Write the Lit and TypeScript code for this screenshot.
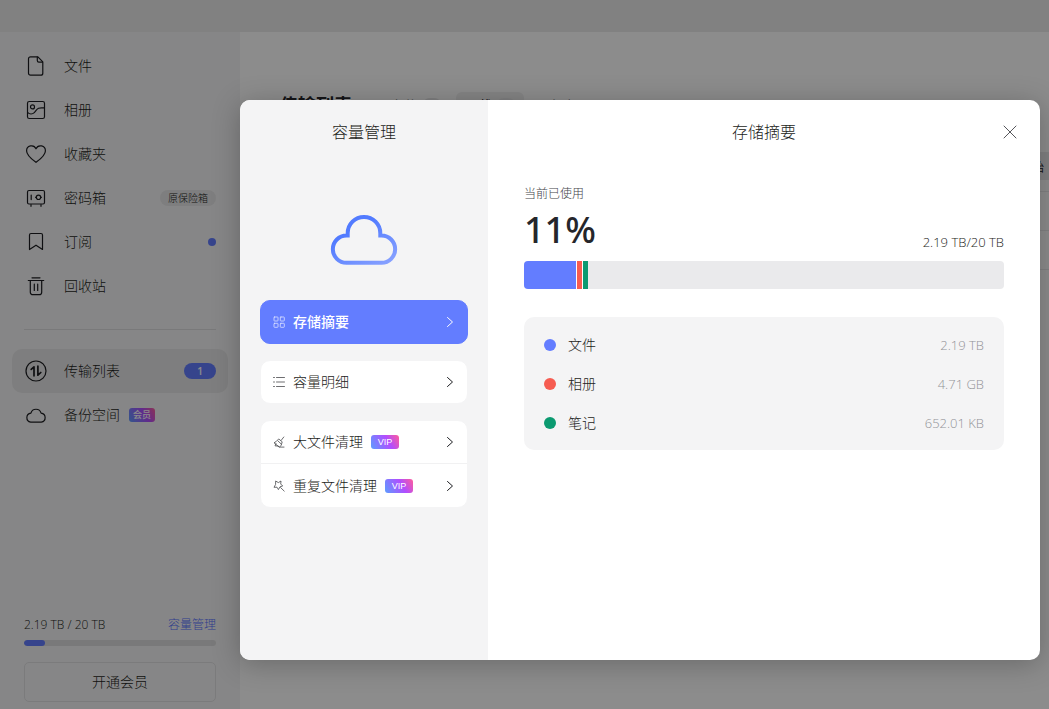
import { LitElement, html, css, svg, nothing, type TemplateResult } from "lit";
import { customElement, property, state } from "lit/decorators.js";
import { classMap } from "lit/directives/class-map.js";
import { styleMap } from "lit/directives/style-map.js";

const glyphs: Record<string, TemplateResult> = {
  file: svg`<path d="M6.500 2.800h7.400l4.900 5v11.400a2 2 0 0 1-2 2H6.500a2 2 0 0 1-2-2V4.800a2 2 0 0 1 2-2z"/><path d="M13.300 3.200v3.400a1.600 1.600 0 0 0 1.600 1.600h3.500"/>`,
  album: svg`<rect x="3.500" y="3.500" width="17" height="17" rx="1.800"/><circle cx="8.500" cy="8.900" r="2"/><path d="M3.800 14.600c1.700 1.700 4.600 1.800 6.500 0 1.500-1.400 2.200-3.400 4.300-4.300 1.800-.7 3.800-.2 5.700-.4"/>`,
  heart: svg`<path d="M12 20.300C8 17.300 2.600 13.400 2.600 8.900a4.900 4.900 0 0 1 9.400-2.100 4.900 4.900 0 0 1 9.400 2.100c0 4.500-5.400 8.400-9.400 11.400z"/>`,
  safe: svg`<rect x="3.500" y="4.500" width="17" height="13.500" rx="1.500"/><circle cx="14.500" cy="11.300" r="2.200"/><path d="M7.200 9v4.600M7 18.500v1.800M17 18.500v1.800M17 11.300h.4M11.600 11.300h.4"/>`,
  bookmark: svg`<path d="M5.500 5a1.500 1.500 0 0 1 1.500-1.500h10A1.500 1.500 0 0 1 18.500 5v14.500L12 15.200l-6.500 4.300z"/>`,
  trash: svg`<path d="M8 3.800h8M4.300 6.500h15.400M6.300 6.500v11.700a2.500 2.500 0 0 0 2.500 2.500h6.400a2.500 2.500 0 0 0 2.500-2.500V6.500M10.300 10v6.500M13.700 10v6.500"/>`,
  transfer: svg`<circle cx="12" cy="12" r="10"/><path stroke-width="1.700" d="M7.200 10.400L10 7.800v9M13.900 7.200v9l2.900-2.700"/>`,
  cloud: svg`<path d="M6.700 19.200a4.600 4.600 0 0 1 .2-9.100 5.300 5.300 0 0 1 10.200 0 4.600 4.600 0 0 1 .2 9.100z"/>`,
  grid: svg`<rect x="1" y="1" width="4" height="4" rx=".6"/><rect x="7.300" y="1" width="4" height="4" rx=".6"/><rect x="1" y="7.300" width="4" height="4" rx=".6"/><rect x="7.300" y="7.300" width="4" height="4" rx=".6"/>`,
  list: svg`<path d="M.5 1.500h1M.5 6h1M.5 10.500h1M3.500 1.500h8M3.500 6h8M3.500 10.500h8"/>`,
  broom: svg`<path d="M10.800 1L8.300 4.200M6 3.200l3.200 2.600-1 3.400-1.800 2L1 6.800l2-1.200zM5 5l3.200 3M3 7.600l-1 2.200 3.200.3 1.300 1h4.500"/>`,
  wand: svg`<path d="M3 1.200l2.300 1.400L8 1l-.3 3 2 2-2.700.8L5.400 9.600 4 7.200 1 7.300l1.400-2.500zM7.600 7.600l3.600 3.500"/>`,
};

const icon = (name: string, box: number) =>
  html`<svg class="icon" viewBox="0 0 ${box} ${box}" width=${box} height=${box} aria-hidden="true">${glyphs[name]}</svg>`;

const shared = css`
  :host { display: block; box-sizing: border-box; font-family: "Open Sans", "Noto Sans CJK SC", sans-serif; }
  *, *::before, *::after { box-sizing: border-box; }
  button { font: inherit; color: inherit; border: 0; background: none; padding: 0; cursor: pointer; }
  a { color: inherit; text-decoration: none; }
  ul { list-style: none; margin: 0; padding: 0; }
  .icon { display: block; flex: none; fill: none; stroke: currentColor; stroke-linecap: round; stroke-linejoin: round; }
`;

interface NavEntry {
  icon: string;
  label: string;
  tag?: string;
  dot?: boolean;
  count?: number;
  member?: boolean;
}

const library: NavEntry[] = [
  { icon: "file", label: "文件" },
  { icon: "album", label: "相册" },
  { icon: "heart", label: "收藏夹" },
  { icon: "safe", label: "密码箱", tag: "原保险箱" },
  { icon: "bookmark", label: "订阅", dot: true },
  { icon: "trash", label: "回收站" },
];

const tools: NavEntry[] = [
  { icon: "transfer", label: "传输列表", count: 1 },
  { icon: "cloud", label: "备份空间", member: true },
];

@customElement("side-nav")
export class SideNav extends LitElement {
  static styles = [shared, css`
    :host { display: flex; flex-direction: column; padding: 12px 12px 7px; background: #f5f5f6; color: #1c1d21; font-size: 14px; font-weight: 300; }
    .row { display: flex; align-items: center; height: 44px; padding: 0 12px; border-radius: 10px; line-height: 20px; }
    .row .icon { stroke-width: 1.2; margin-right: 16px; }
    .row.current { background: #e6e6e7; }
    .end { margin-left: auto; }
    .tag { height: 16px; padding: 0 8px; border-radius: 8px; background: #e6e6e7; font-size: 10px; line-height: 16px; }
    .dot { width: 8px; height: 8px; border-radius: 50%; background: #637dff; }
    .count { width: 32px; height: 16px; border-radius: 8px; background: #637dff; color: #fff; font-size: 10px; font-weight: 600; line-height: 16px; text-align: center; }
    .member { margin-left: 9px; width: 26px; height: 14px; border-radius: 3px; color: #fff; font-size: 9px; font-weight: 500; line-height: 14px; text-align: center; background: linear-gradient(60deg, #5c9dff, #b14dff 60%, #ff5c9a); }
    .rule { height: 1px; margin: 21px 12px 19px; border: 0; background: #dcdcde; }
    .foot { margin-top: auto; padding: 0 12px; }
    .usage { display: flex; justify-content: space-between; font-size: 12px; line-height: 20px; }
    .usage a { color: #5770ff; }
    .meter { height: 6px; margin: 5px 0 16px; border-radius: 3px; background: #dcdcde; overflow: hidden; }
    .fill { height: 100%; border-radius: 3px; background: #637dff; }
    .join { width: 100%; height: 40px; padding-bottom: 2px; border: 1px solid #e0e0e2; border-radius: 5px; }
  `];

  @property({ type: Number }) used = 11;

  private row(entry: NavEntry) {
    return html`<li><a href="#" class=${classMap({ row: true, current: !!entry.count })}>
      ${icon(entry.icon, 24)}<span>${entry.label}</span>
      ${entry.tag ? html`<span class="tag end">${entry.tag}</span>` : nothing}
      ${entry.dot ? html`<span class="dot end"></span>` : nothing}
      ${entry.count ? html`<span class="count end">${entry.count}</span>` : nothing}
      ${entry.member ? html`<span class="member">会员</span>` : nothing}
    </a></li>`;
  }

  render() {
    return html`
      <nav>
        <ul>${library.map((e) => this.row(e))}</ul>
        <hr class="rule" />
        <ul>${tools.map((e) => this.row(e))}</ul>
      </nav>
      <div class="foot">
        <div class="usage"><span>2.19 TB / 20 TB</span><a href="#">容量管理</a></div>
        <div class="meter"><div class="fill" style=${styleMap({ width: `${this.used}%` })}></div></div>
        <button class="join" type="button">开通会员</button>
      </div>`;
  }
}

@customElement("transfer-view")
export class TransferView extends LitElement {
  static styles = [shared, css`
    :host { padding-top: 60px; background: #fff; color: #25262b; font-size: 14px; overflow: hidden; }
    .head { display: flex; align-items: center; height: 26px; padding-left: 40px; }
    h1 { margin: 0 30px 0 0; font-size: 18px; line-height: 24px; font-weight: 700; }
    .tab { display: flex; align-items: center; gap: 4px; height: 26px; padding: 2px 8px 0; margin-right: 6px; border-radius: 6px; color: #77787d; line-height: 20px; }
    .tab.on { background: #f0f0f1; color: #25262b; }
    .num { width: 20px; height: 16px; border-radius: 8px; background: #e6e6e7; font-size: 10px; line-height: 16px; }
    .bar { display: flex; justify-content: flex-end; margin-top: 34px; }
    .start { height: 28px; padding: 2px 5px 0 12px; background: #ececed; border-radius: 6px 0 0 6px; font-size: 12px; }
    .rows { margin: 11px 0 0 40px; border-top: 1px solid #ececed; }
    .line { height: 39px; border-bottom: 1px solid #ececed; }
  `];

  render() {
    return html`
      <div class="head">
        <h1>传输列表</h1>
        <button class="tab" type="button">上传<span class="num">0</span></button>
        <button class="tab on" type="button">下载<span class="num">1</span></button>
        <button class="tab" type="button">云添加</button>
      </div>
      <div class="bar"><button class="start" type="button">全部开始</button></div>
      <div class="rows"><div class="line"></div><div class="line"></div></div>`;
  }
}

interface Share { label: string; size: string; tone: string; }

const shares: Share[] = [
  { label: "文件", size: "2.19 TB", tone: "blue" },
  { label: "相册", size: "4.71 GB", tone: "red" },
  { label: "笔记", size: "652.01 KB", tone: "green" },
];

@customElement("storage-dialog")
export class StorageDialog extends LitElement {
  static styles = [shared, css`
    :host { display: flex; border-radius: 10px; overflow: hidden; background: #fff; color: #1c1d21; font-size: 14px; font-weight: 300; box-shadow: 0 4px 28px rgba(0, 0, 0, 0.25); }
    h2 { margin: 0; font-size: 16px; line-height: 24px; font-weight: 300; text-align: center; }
    .menu { flex: 0 0 248px; padding: 20px; background: #f4f4f5; }
    .art { display: block; width: 68px; height: 52px; margin: 70px auto 34px; }
    .card { border: 1px solid #f4f4f5; border-radius: 10px; background: #fff; overflow: hidden; margin-bottom: 16px; }
    .card.on { border-color: #637dff; background: #637dff; color: #fff; }
    .item { display: flex; align-items: center; width: 100%; height: 42px; padding: 0 11px 0 12px; line-height: 20px; text-align: left; font-weight: 300; }
    .item + .item { height: 44px; border-top: 1px solid #f1f1f2; }
    .on .item { font-weight: 500; }
    .item .icon { stroke-width: 0.8; margin-right: 8px; opacity: 0.8; }
    .vip { margin-left: 8px; width: 28px; height: 14px; border-radius: 3px; color: #fff; font: 400 9px/14px "Liberation Sans", sans-serif; text-align: center; background: linear-gradient(60deg, #5c9dff, #b14dff 60%, #ff5c9a); }
    .item .go { margin: 0 0 0 auto; stroke-width: 1; opacity: 1; }
    .body { flex: 1; min-width: 0; padding: 20px 36px; }
    .top { display: grid; grid-template-columns: 24px 1fr 24px; margin-right: -18px; margin-left: -18px; }
    .top h2 { grid-column: 2; }
    .close { width: 24px; height: 24px; display: grid; place-items: center; color: #55565b; }
    .label { margin: 41px 0 0; font-size: 12px; line-height: 18px; color: #44454a; }
    .figures { display: flex; justify-content: space-between; align-items: flex-end; height: 51px; }
    .percent { font-family: "Noto Sans", sans-serif; font-size: 36px; line-height: 48px; font-weight: 500; color: #25262b; }
    .total { padding-bottom: 2px; font-size: 13px; line-height: 20px; }
    .track { display: flex; gap: 1px; height: 28px; margin: 7px 0 28px; border-radius: 4px; background: #eaeaec; overflow: hidden; }
    .part { height: 100%; box-shadow: 1px 0 #fff; }
    .blue { background: #637dff; }
    .red { background: #f65c51; }
    .green { background: #0b9a70; }
    .legend { display: grid; gap: 19px; padding: 18px 20px 17px; border-radius: 10px; background: #f4f4f5; }
    .entry { display: flex; align-items: center; gap: 12px; line-height: 20px; }
    .swatch { width: 12px; height: 12px; border-radius: 50%; }
    .part.green { box-shadow: none; }
    .size { margin-left: auto; font-size: 13px; color: #929397; }
  `];

  @state() private split = [10.9, 1, 1];

  private item(name: string, label: string, vip = false) {
    return html`<button class="item" type="button">
      ${icon(name, 12)}<span>${label}</span>${vip ? html`<span class="vip">VIP</span>` : nothing}
      <svg class="icon go" viewBox="0 0 12 12" width="12" height="12" aria-hidden="true"><path d="M3.500 1.500L8.500 6l-5 4.500"/></svg>
    </button>`;
  }

  render() {
    return html`
      <section class="menu">
        <h2>容量管理</h2>
        <svg class="art" viewBox="0 0 68 52" aria-hidden="true">
          <defs><linearGradient id="sky" x1="0.2" y1="0.1" x2="0.9" y2="1"><stop offset="0.2" stop-color="#527bff"/><stop offset="1" stop-color="#86a0ff"/></linearGradient></defs>
          <path fill="none" stroke="url(#sky)" stroke-width="4" d="M16.500 48.800a13.650 13.650 0 0 1 0-27.300h1.200v-2.300a16.300 16.300 0 0 1 32.600 0v2.300h1.200a13.650 13.650 0 0 1 0 27.300z"/>
        </svg>
        <div class="card on">${this.item("grid", "存储摘要")}</div>
        <div class="card">${this.item("list", "容量明细")}</div>
        <div class="card">${this.item("broom", "大文件清理", true)}${this.item("wand", "重复文件清理", true)}</div>
      </section>
      <section class="body">
        <div class="top">
          <h2>存储摘要</h2>
          <button class="close" type="button" aria-label="关闭"><svg class="icon" viewBox="0 0 14 14" width="14" height="14"><path d="M1 1l12 12M13 1L1 13"/></svg></button>
        </div>
        <p class="label">当前已使用</p>
        <div class="figures"><span class="percent">11%</span><span class="total">2.19 TB/20 TB</span></div>
        <div class="track">${shares.map((s, i) => html`<div class=${`part ${s.tone}`} style=${styleMap({ width: `${this.split[i]}%` })}></div>`)}</div>
        <ul class="legend">
          ${shares.map((s) => html`<li class="entry"><span class=${`swatch ${s.tone}`}></span><span>${s.label}</span><span class="size">${s.size}</span></li>`)}
        </ul>
      </section>`;
  }
}

@customElement("app-root")
export class AppRoot extends LitElement {
  static styles = [shared, css`
    :host { display: grid; grid-template: 32px 1fr / 240px 1fr; height: 100vh; overflow: hidden; position: relative; }
    .titlebar { grid-column: 1 / -1; background: #ebebec; }
    .scrim { position: absolute; inset: 0; display: flex; padding: 100px 9px 49px 240px; background: rgba(0, 0, 0, 0.45); }
    .dialog { flex: 1; min-width: 0; }
  `];

  render() {
    return html`
      <header class="titlebar"></header>
      <side-nav></side-nav>
      <transfer-view></transfer-view>
      <div class="scrim"><storage-dialog class="dialog" role="dialog" aria-label="容量管理"></storage-dialog></div>`;
  }
}
